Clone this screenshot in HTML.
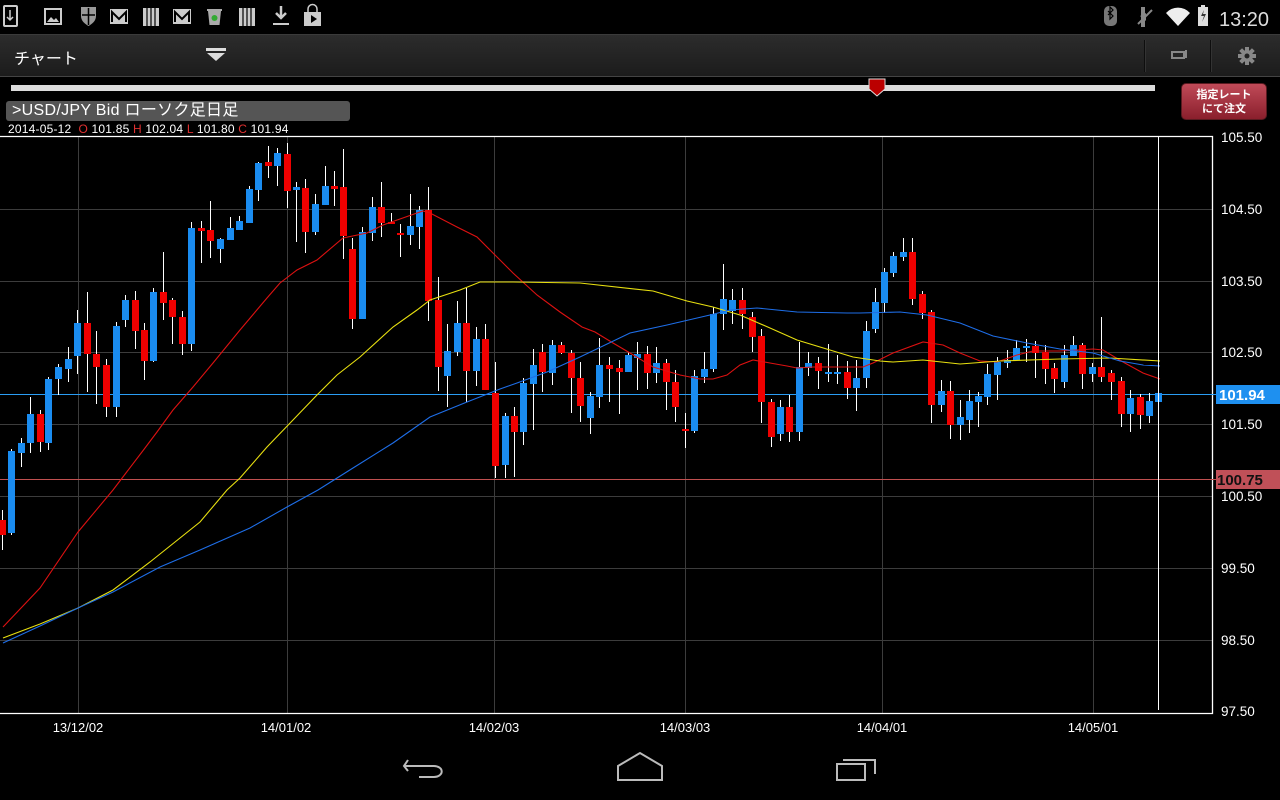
<!DOCTYPE html>
<html><head><meta charset="utf-8">
<style>
*{margin:0;padding:0;box-sizing:border-box}
body{width:1280px;height:800px;background:#000;overflow:hidden;position:relative;font-family:"Liberation Sans","Noto Sans CJK JP",sans-serif;color:#fff}
.abs{position:absolute}
#bar{left:0;top:34px;width:1280px;height:43px;background:linear-gradient(#2c2c2c,#1c1c1c);border-top:1px solid #3a3a3a;border-bottom:1px solid #444}
#title{left:14px;top:45px;font-size:16px;color:#fff}
.div{top:40px;width:2px;height:32px;background:#0e0e0e;border-right:1px solid #333}
#slider{left:11px;top:85px;width:1144px;height:6px;background:#dcdcdc}
#btn{left:1181px;top:83px;width:86px;height:37px;border-radius:5px;background:linear-gradient(#c04a58,#8a1f2c);border:1px solid #5a1a20;font-size:11px;font-weight:bold;text-align:center;line-height:14px;padding-top:4px}
#lbl{left:6px;top:101px;width:344px;height:20px;background:#555;border-radius:3px;font-size:16px;line-height:20px;padding-left:6px;letter-spacing:0.3px}
#ohlc{left:8px;top:123px;font-size:12px;line-height:12px;letter-spacing:0.2px}
.r{color:#e03030}
</style></head><body>
<svg class="abs" style="left:0;top:0" width="1280" height="34">
 <g fill="#ccc">
  <rect x="4" y="6" width="13" height="20" rx="1" fill="none" stroke="#ccc" stroke-width="2"/><path d="M10 10v10M7 17l3 3 3-3" stroke="#ccc" fill="none" stroke-width="1.5"/>
  <rect x="45" y="9" width="16" height="15" fill="none" stroke="#ccc" stroke-width="2"/><path d="M47 22l4-5 3 3 2-2 3 4z"/>
  <path d="M81 7h15v9c0 5-4 8-7.5 10-3.5-2-7.5-5-7.5-10z" fill="#999"/><path d="M88.5 8v17M82 15h13" stroke="#000" stroke-width="1.5"/>
  <rect x="110" y="9" width="18" height="15"/><path d="M112 22V12l7 7 7-7v10" stroke="#000" stroke-width="2" fill="none"/>
  <rect x="143" y="8" width="16" height="18"/><path d="M147 8v18M151 8v18M155 8v18" stroke="#000" stroke-width="1.2"/>
  <rect x="173" y="9" width="18" height="15"/><path d="M175 22V12l7 7 7-7v10" stroke="#000" stroke-width="2" fill="none"/>
  <path d="M208 11h13l-1.5 14h-10z" fill="#aaa"/><rect x="207" y="9" width="15" height="2" fill="#aaa"/><circle cx="214.5" cy="18" r="3" fill="#3a3" />
  <rect x="239" y="8" width="16" height="18"/><path d="M243 8v18M247 8v18M251 8v18" stroke="#000" stroke-width="1.2"/>
  <path d="M281 6v11M276 13l5 5 5-5" stroke="#ccc" stroke-width="2.5" fill="none"/><rect x="273" y="23" width="16" height="2"/>
  <path d="M304 12h17v14h-17z"/><path d="M308 12v-3a4.5 4.5 0 0 1 9 0v3" stroke="#ccc" fill="none" stroke-width="1.5"/><path d="M311 15v8l6-4z" fill="#000"/>
 </g>
 <g fill="#777">
  <rect x="1104" y="6" width="13" height="20" rx="5"/><path d="M1108 11l5 5-3 3v-12l3 3-5 5" stroke="#000" fill="none" stroke-width="1.2"/>
  <path d="M1142 8l2 0v18h-2zM1138 24l14-14" stroke="#888" stroke-width="2"/><path d="M1140 16l6-3v8z" fill="#888"/>
  <path d="M1166 13a16 16 0 0 1 24 0l-12 13z" fill="#eee"/>
  <rect x="1198" y="7" width="10" height="19" fill="#ddd"/><rect x="1201" y="5" width="4" height="2" fill="#ddd"/><path d="M1204 10l-3 6h3l-2 6 4-8h-3z" fill="#333"/>
 </g>
 <text x="1219" y="26" font-size="20" fill="#ddd" font-family="Liberation Sans">13:20</text>
</svg>
<div id="bar" class="abs"></div>
<div id="title" class="abs">チャート</div>
<svg class="abs" style="left:205px;top:48px" width="22" height="14"><rect x="1" y="0" width="20" height="3" fill="#ddd"/><path d="M2 5h18l-9 8z" fill="#ddd"/></svg>
<div class="div abs" style="left:1144px"></div>
<div class="div abs" style="left:1210px"></div>
<svg class="abs" style="left:1170px;top:48px" width="20" height="14"><rect x="2" y="4" width="12" height="6" fill="none" stroke="#888" stroke-width="2"/><rect x="15" y="2" width="2" height="8" fill="#888"/></svg>
<svg class="abs" style="left:1236px;top:46px" width="22" height="20"><g fill="#888"><circle cx="11" cy="10" r="6"/><rect x="9" y="1" width="4" height="18"/><rect x="2" y="8" width="18" height="4"/><rect x="9" y="1" width="4" height="18" transform="rotate(45 11 10)"/><rect x="9" y="1" width="4" height="18" transform="rotate(-45 11 10)"/></g><circle cx="11" cy="10" r="2.5" fill="#222"/></svg>
<div id="slider" class="abs"></div>
<svg class="abs" style="left:868px;top:78px" width="20" height="20"><path d="M1 1h16v10l-8 7-8-7z" fill="#b00" stroke="#ddd" stroke-width="1"/></svg>
<div id="btn" class="abs">指定レート<br>にて注文</div>
<div id="lbl" class="abs">&gt;USD/JPY Bid ローソク足日足</div>
<div id="ohlc" class="abs">2014-05-12 &nbsp;<span class="r">O</span> 101.85 <span class="r">H</span> 102.04 <span class="r">L</span> 101.80 <span class="r">C</span> 101.94</div>

<svg id="ch" class="abs" style="left:0;top:0" width="1280" height="800" font-family="Liberation Sans">
 <g stroke="#3c3c3c" stroke-width="1">
  <path d="M0 209.5H1212M0 281.5H1212M0 352.5H1212M0 424.5H1212M0 496.5H1212M0 568.5H1212M0 640.5H1212"/>
  <path d="M78.5 137V713M287.5 137V713M494.5 137V713M685.5 137V713M882.5 137V713M1093.5 137V713"/>
 </g>
 <path d="M0 136.5H1212.5V713.5H0" fill="none" stroke="#fff" stroke-width="1.3"/>
 <path d="M0 394.5H1216" stroke="#2a9df4" stroke-width="1"/>
 <path d="M0 479.5H1216" stroke="#c05050" stroke-width="1"/>
 <g id="cd"></g>
 <polyline fill="none" stroke="#dd1111" stroke-width="1.1" points="3,627 40,588 78,532 113,490 145,448 157,432 173,410 193,387 213,363 240,330 267,298 280,283 297,270 317,260 343,238 367,233 383,225 417,213 423,211 430,213 457,227 477,237 495,255 513,273 537,295 560,312 582,327 595,332 613,343 630,353 653,367 680,375 700,379 713,379 727,375 740,365 753,360 770,363 787,366 797,368 813,367 830,367 847,367 863,367 873,363 893,353 923,342 943,345 960,353 980,361 997,362 1017,355 1033,351 1060,351 1077,350 1093,349 1103,350 1123,362 1143,373 1160,379"/>
 <polyline fill="none" stroke="#e8e010" stroke-width="1.1" points="3,638 40,624 78,608 113,590 150,562 200,522 227,490 240,478 267,447 293,420 317,395 337,375 360,357 393,327 417,310 430,300 460,290 480,282 513,282 580,283 653,291 687,301 713,307 740,315 770,328 797,340 820,347 853,357 880,361 893,362 923,360 960,364 1000,361 1060,359 1110,358 1160,361"/>
 <polyline fill="none" stroke="#1e6ee8" stroke-width="1.1" points="3,643 40,626 78,608 113,592 160,567 200,550 250,528 287,507 318,490 353,468 393,443 430,417 467,402 500,389 517,383 547,372 580,357 630,333 667,325 710,315 730,310 757,308 797,312 847,313 860,313 900,312 927,315 960,323 993,336 1027,343 1060,349 1093,353 1120,361 1143,365 1160,366"/>
 <path d="M1158.5 136V710" stroke="#fff" stroke-width="1"/>
 <rect x="1216" y="385" width="64" height="19" fill="#1e90f0"/>
 <rect x="1216" y="470" width="64" height="19" fill="#c05058"/>
 <g fill="#fff" font-size="13.5">
  <text x="1221" y="142">105.50</text><text x="1221" y="214">104.50</text><text x="1221" y="286">103.50</text><text x="1221" y="357">102.50</text>
  <text x="1219" y="400" font-size="15" font-weight="bold">101.94</text>
  <text x="1221" y="429">101.50</text>
  <text x="1217" y="485" font-size="15" font-weight="bold" fill="#111">100.75</text>
  <text x="1221" y="501">100.50</text><text x="1221" y="573">99.50</text><text x="1221" y="645">98.50</text><text x="1221" y="716">97.50</text>
 </g>
 <g fill="#fff" font-size="13" text-anchor="middle">
  <text x="78" y="732">13/12/02</text><text x="286" y="732">14/01/02</text><text x="494" y="732">14/02/03</text><text x="685" y="732">14/03/03</text><text x="882" y="732">14/04/01</text><text x="1093" y="732">14/05/01</text>
 </g>
 <g fill="none" stroke="#bbb" stroke-width="2">
  <path d="M408 760l-4 6 4 5M404 766h30a7 5 0 0 1 0 11h-15"/>
  <path d="M618 780v-14l22-13 22 13v14z"/>
  <path d="M837 764h28v16h-28zM843 760h32v14"/>
 </g>
</svg>
<script>
var C=[[2,510,520,535,550,0],[11,449,451,533,535,1],[21,438,443,453,467,1],[30,397,414,443,453,1],[40,410,414,442,452,0],[48,377,379,443,450,1],[58,364,367,379,395,1],[68,347,359,369,382,1],[77,310,323,356,374,1],[87,292,323,354,392,0],[96,331,354,367,404,0],[106,359,365,407,417,0],[116,322,326,407,417,1],[125,295,300,320,327,1],[135,291,300,331,349,0],[144,323,330,361,380,0],[153,288,292,361,362,1],[163,252,292,303,320,0],[172,298,300,317,344,0],[182,311,317,344,355,0],[191,222,228,344,351,1],[201,221,228,231,263,0],[210,201,230,241,258,0],[220,238,239,249,263,1],[230,217,228,240,240,1],[239,216,221,230,230,1],[249,186,189,223,223,1],[258,162,163,190,201,1],[268,146,162,166,178,0],[277,148,153,166,186,1],[287,143,154,191,208,0],[296,182,187,190,242,1],[305,179,188,232,253,0],[315,194,204,232,235,1],[325,166,186,205,205,1],[334,171,186,189,206,0],[343,149,187,236,259,0],[352,238,249,319,329,0],[362,227,232,319,319,1],[372,197,207,233,241,1],[381,182,207,223,237,0],[391,213,222,224,223,0],[400,224,233,235,257,0],[410,194,226,235,245,1],[419,206,210,227,249,1],[428,187,210,301,321,0],[438,277,300,367,391,0],[447,324,351,376,407,1],[457,301,323,352,356,1],[466,288,323,371,402,0],[476,327,339,371,386,1],[485,324,339,390,390,0],[495,362,393,466,478,0],[505,413,416,465,478,1],[514,407,416,432,477,0],[523,378,383,432,445,1],[533,349,365,384,430,1],[542,344,352,372,392,0],[552,340,345,373,385,1],[561,342,345,353,354,0],[571,350,353,378,413,0],[580,362,378,406,422,0],[590,392,396,418,434,1],[599,338,365,397,408,1],[609,357,365,369,402,0],[619,360,368,372,414,0],[628,352,355,372,372,1],[637,342,354,358,390,1],[647,346,354,373,389,0],[656,347,363,373,383,1],[666,359,363,382,410,0],[675,370,382,407,422,0],[685,413,429,431,448,0],[694,370,376,431,433,1],[704,352,369,377,383,1],[713,307,314,369,372,1],[723,264,299,314,330,1],[732,289,300,311,324,1],[742,288,300,314,329,0],[752,312,317,337,352,0],[761,329,336,402,423,0],[771,399,402,437,447,0],[780,400,407,434,441,1],[789,395,407,432,442,0],[799,342,367,432,441,1],[808,352,363,368,376,1],[818,357,363,371,389,0],[828,344,372,374,382,1],[837,355,372,374,384,1],[847,361,372,388,399,0],[856,360,378,388,411,1],[866,321,331,378,388,1],[875,288,302,329,333,1],[884,268,272,303,313,1],[893,252,256,273,277,1],[903,238,252,257,261,1],[912,238,252,299,305,0],[922,291,294,313,319,0],[931,310,312,405,423,0],[941,380,391,405,412,1],[950,381,391,425,439,0],[960,400,417,425,440,1],[969,390,401,420,433,1],[978,392,396,402,427,1],[987,364,374,397,405,1],[997,357,362,375,400,1],[1007,350,360,363,368,1],[1016,340,348,360,360,1],[1026,339,346,348,362,1],[1035,341,346,353,378,0],[1045,345,352,369,384,0],[1054,363,368,379,393,0],[1064,345,355,382,388,1],[1073,336,345,356,356,1],[1082,343,345,374,389,0],[1092,363,367,374,382,1],[1101,317,367,377,382,0],[1111,370,373,382,400,0],[1121,377,381,414,427,0],[1130,390,398,414,432,1],[1140,394,397,415,429,0],[1149,393,401,416,423,1],[1158,393,393,402,402,1]];
var s='';C.forEach(function(c){var x=c[0],col=c[5]?'#1a8cf0':'#f00000';
s+='<line x1="'+(x+.5)+'" y1="'+c[1]+'" x2="'+(x+.5)+'" y2="'+c[4]+'" stroke="#fff" stroke-width="1"/>';
var h=Math.max(2,c[3]-c[2]);s+='<rect x="'+(x-3)+'" y="'+c[2]+'" width="7" height="'+h+'" fill="'+col+'"/>';});
document.getElementById('cd').innerHTML=s;
</script>
</body></html>
